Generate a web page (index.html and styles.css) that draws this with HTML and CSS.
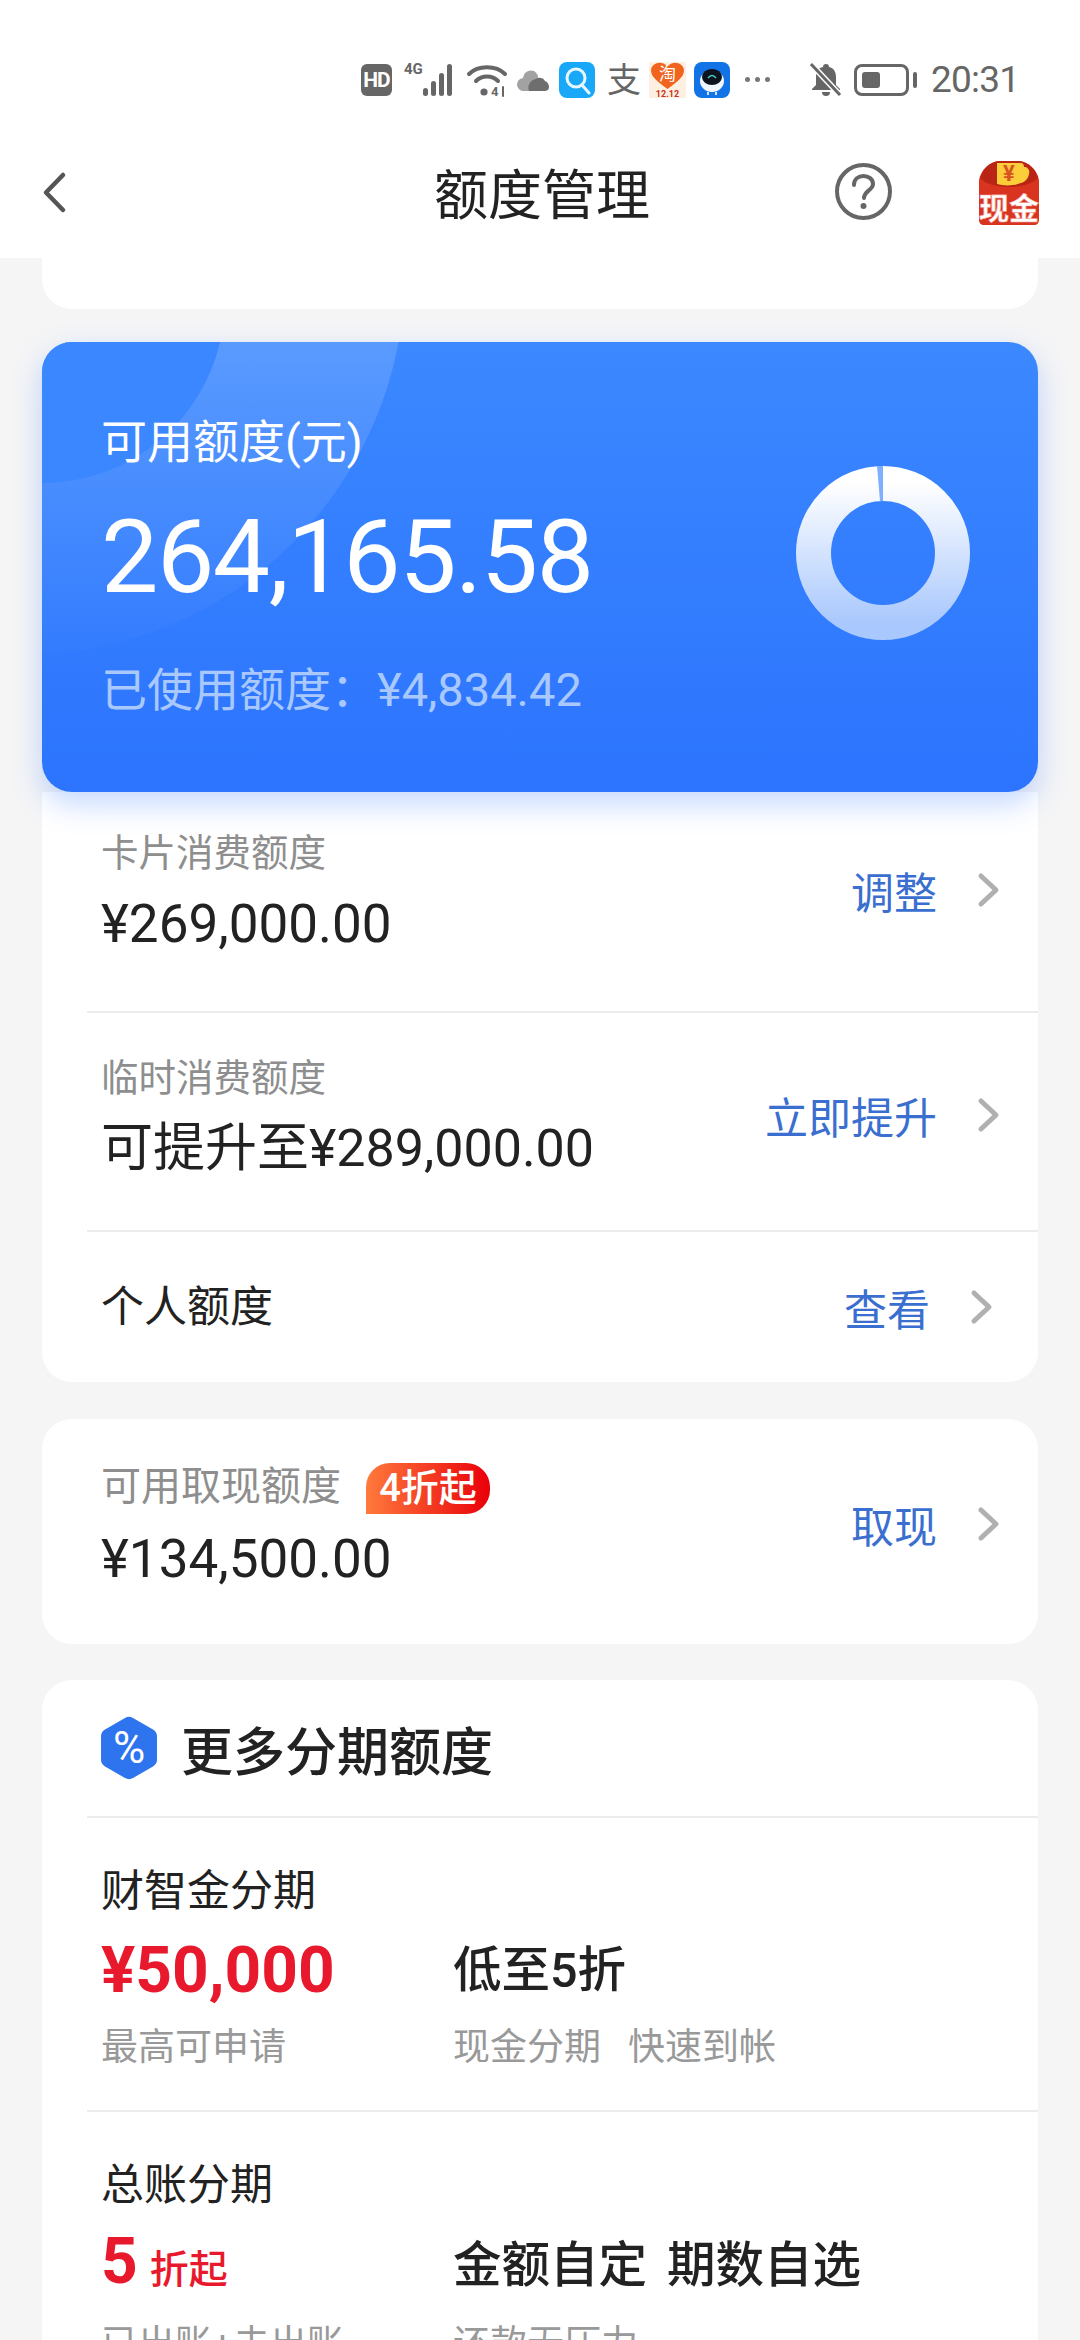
FILE: index.html
```html
<!DOCTYPE html>
<html lang="zh-CN">
<head>
    <meta charset="UTF-8">
    <title>额度管理</title>
    <link rel="stylesheet" href="styles.css">
</head>
<body>
    <header class="top">
        <div class="status">
            <span class="hd">HD</span>
            <svg class="signal" width="53" height="34" viewBox="0 0 53 34">
                <text x="0" y="11" class="net">4G</text>
                <g fill="#666"><rect x="19" y="25" width="5" height="8" rx="2.5"/><rect x="27" y="18" width="5" height="15" rx="2.5"/><rect x="35" y="10" width="5" height="23" rx="2.5"/><rect x="43" y="1" width="5" height="32" rx="2.5"/></g>
            </svg>
            <svg class="wifi" width="40" height="34" viewBox="0 0 40 34" fill="none" stroke="#666" stroke-width="4" stroke-linecap="round">
                <path d="M2 11C11 2 29 2 38 11"/><path d="M9 18C15 12 25 12 31 18"/>
                <circle cx="17" cy="29" r="3.6" fill="#666" stroke="none"/>
                <text x="24" y="33" class="wifi-4g">4</text>
                <path d="M36 24V33" stroke-width="2"/>
            </svg>
            <svg class="cloud" width="32" height="24" viewBox="0 0 32 24">
                <path d="M7 23a6.500 6.500 0 0 1-1-13C7 4 12 1 17 3c2 1 3 3 4 5l-2 15z" fill="#a2a2a2"/>
                <path d="M12 23c-2-5 1-11 7-12 2-2 7-2 9 2 3 1 4 4 4 6 0 3-2 4-5 4z" fill="#6e6e6e"/>
            </svg>
            <svg class="app search" width="36" height="36" viewBox="0 0 36 36">
                <rect width="36" height="36" rx="8" fill="#18a8f7"/>
                <circle cx="17" cy="16" r="9" fill="none" stroke="#e8f7ff" stroke-width="3"/>
                <path d="M23 23l7 8" stroke="#e8f7ff" stroke-width="3" stroke-linecap="round"/>
            </svg>
            <span class="zhi">支</span>
            <svg class="app taobao" width="37" height="36" viewBox="0 0 37 36">
                <rect width="37" height="36" fill="#fdf0e0"/>
                <path d="M18.500 27C9 20 2 15 2 8.500 2 3 8 0 12.500 1c3 .5 5 2 6 3.500 1-1.500 3-3 6-3.500C29 0 35 3 35 8.500 35 15 28 20 18.500 27z" fill="#f0641e"/>
                <text x="18.500" y="18" class="tao">淘</text>
                <text x="18.500" y="35" class="tao-date">12.12</text>
            </svg>
            <svg class="app bird" width="36" height="36" viewBox="0 0 36 36">
                <rect width="36" height="36" rx="8" fill="#1273e6"/>
                <ellipse cx="18" cy="19" rx="12" ry="11" fill="#f2f7fd"/>
                <ellipse cx="18" cy="15" rx="10" ry="8" fill="#0d1420"/>
                <path d="M14 16q4-5 8 0" fill="none" stroke="#3fd0c8" stroke-width="1.500"/>
                <path d="M14 30v3M22 30v3" stroke="#cfe3fa" stroke-width="2"/>
            </svg>
            <span class="dots"><i></i><i></i><i></i></span>
            <svg class="bell" width="32" height="34" viewBox="0 0 32 34">
                <path d="M16 1c2 0 3 1 3 3 5 1 7 5 7 10v8l4 4v1H2v-1l4-4v-8c0-5 2-9 7-10 0-2 1-3 3-3z" fill="#666"/>
                <path d="M12 29h8a4 4 0 0 1-8 0z" fill="#666"/>
                <path d="M2 2l28 30" stroke="#fff" stroke-width="6"/>
                <path d="M1 1l29 31" stroke="#666" stroke-width="3"/>
            </svg>
            <span class="battery"><i></i></span>
            <span class="battery-tip"></span>
            <span class="time">20:31</span>
        </div>
        <div class="nav">
            <svg class="back" width="24" height="41" viewBox="0 0 24 41" fill="none" stroke="#555" stroke-width="4.500" stroke-linecap="round" stroke-linejoin="round">
                <path d="M21 3L4 20.500 21 38"/>
            </svg>
            <h1>额度管理</h1>
            <svg class="help" width="57" height="57" viewBox="0 0 57 57">
                <circle cx="28.500" cy="28.500" r="26.500" fill="none" stroke="#666" stroke-width="4"/>
                <path d="M19 22c0-6 4.500-9 9.500-9s9.500 3 9.500 8c0 6-9 7-9 14" fill="none" stroke="#666" stroke-width="4" stroke-linecap="round"/>
                <circle cx="28.500" cy="43" r="3" fill="#666"/>
            </svg>
            <svg class="packet" width="64" height="66" viewBox="0 0 64 66">
                <path d="M2 20C4 10 12 2 22 1h20c10 1 18 9 20 19v40c0 3-2 5-5 5H7c-3 0-5-2-5-5z" fill="#d8341f"/>
                <path d="M3 18C14 30 50 30 61 18 58 8 51 2 42 1H22C13 2 6 8 3 18z" fill="#b92414"/>
                <path d="M20 3h24c2 0 3 2 3 4 4 0 6 3 5 7-1 5-4 8-8 9-8 3-17 3-24 1z" fill="#fbcd3a"/>
                <text x="32" y="21" class="packet-yen">¥</text>
                <text x="32" y="59" class="packet-text">现金</text>
            </svg>
        </div>
    </header>

    <main class="content">
        <div class="card stub"></div>

        <section class="limit">
            <div class="limit-text">
                <div class="limit-title">可用额度(元)</div>
                <div class="limit-amount">264,165.58</div>
                <div class="limit-used"><span>已使用额度：</span><span class="used-num">¥4,834.42</span></div>
            </div>
            <svg class="donut" width="176" height="176" viewBox="0 0 176 176">
                <defs>
                    <linearGradient id="ring" x1="0" y1="0" x2="0" y2="1">
                        <stop offset="0" stop-color="#ffffff"/>
                        <stop offset="1" stop-color="#a9c8fd"/>
                    </linearGradient>
                </defs>
                <circle cx="88" cy="88" r="69.500" fill="none" stroke="url(#ring)" stroke-width="35"/>
                <path d="M88 1V36L85 36 82 1z" fill="#7fb0ff"/>
            </svg>
        </section>

        <div class="card rows">
            <div class="row row-one">
                <div>
                    <div class="label">卡片消费额度</div>
                    <div class="money">¥269,000.00</div>
                </div>
                <a class="action">调整<svg class="chev" width="24" height="34" viewBox="0 0 24 34"><path d="M4 3l15 14L4 31"/></svg></a>
            </div>
            <div class="row row-two">
                <div>
                    <div class="label">临时消费额度</div>
                    <div class="money">可提升至¥289,000.00</div>
                </div>
                <a class="action">立即提升<svg class="chev" width="24" height="34" viewBox="0 0 24 34"><path d="M4 3l15 14L4 31"/></svg></a>
            </div>
            <div class="row row-three">
                <div class="plain">个人额度</div>
                <a class="action">查看<svg class="chev" width="24" height="34" viewBox="0 0 24 34"><path d="M4 3l15 14L4 31"/></svg></a>
            </div>
        </div>

        <div class="card cash">
            <div class="row row-cash">
                <div>
                    <div class="cash-top">
                        <span class="label label-big">可用取现额度</span>
                        <span class="badge">4折起</span>
                    </div>
                    <div class="money">¥134,500.00</div>
                </div>
                <a class="action">取现<svg class="chev" width="24" height="34" viewBox="0 0 24 34"><path d="M4 3l15 14L4 31"/></svg></a>
            </div>
        </div>

        <div class="card more">
            <div class="more-head">
                <svg class="hex" width="58" height="64" viewBox="0 0 58 64">
                    <path d="M25 2a8 8 0 0 1 8 0l20 11.500a8 8 0 0 1 4 7v23a8 8 0 0 1-4 7L33 62a8 8 0 0 1-8 0L5 50.500a8 8 0 0 1-4-7v-23a8 8 0 0 1 4-7z" fill="#2e74ee"/>
                    <text x="29" y="47" class="hex-text">%</text>
                </svg>
                <h2>更多分期额度</h2>
            </div>
            <div class="plan">
                <div class="plan-title">财智金分期</div>
                <div class="plan-grid">
                    <div class="big-red">¥50,000</div>
                    <div class="big-dark">低至5折</div>
                    <div class="sub">最高可申请</div>
                    <div class="sub sub-gap"><span>现金分期</span><span>快速到帐</span></div>
                </div>
            </div>
            <div class="plan plan-last">
                <div class="plan-title">总账分期</div>
                <div class="plan-grid">
                    <div class="big-red">5<span class="red-unit">折起</span></div>
                    <div class="big-dark words"><span>金额自定</span> <span>期数自选</span></div>
                    <div class="sub">已出账+未出账</div>
                    <div class="sub">还款无压力</div>
                </div>
            </div>
        </div>
    </main>
</body>
</html>
```

FILE: styles.css
```css
* {
    margin: 0;
    padding: 0;
    box-sizing: border-box;
}

body {
    width: 1080px;
    height: 2340px;
    overflow: hidden;
    background-color: #f5f5f6;
    font-family: Roboto, "Noto Sans CJK SC", sans-serif;
    color: #222;
}

svg {
    flex-shrink: 0;
    overflow: visible;
}

/* top area */
.top {
    height: 258px;
    background-color: #fff;
}

.status {
    height: 130px;
    padding: 29px 0 0 361px;
    display: flex;
    align-items: center;
    color: #666;
}

.hd {
    width: 31px;
    height: 32px;
    margin-right: 12px;
    border-radius: 6px;
    background-color: #666;
    color: #fff;
    font-size: 21px;
    font-weight: 700;
    letter-spacing: -1px;
    line-height: 32px;
    text-align: center;
}

.net {
    font-family: Roboto, sans-serif;
    font-size: 15px;
    font-weight: 700;
    fill: #666;
}

.wifi-4g {
    font-family: Roboto, sans-serif;
    font-size: 13px;
    font-weight: 700;
    fill: #666;
    stroke: none;
}

.signal { margin-right: 10px; }
.wifi { margin-right: 10px; }
.cloud { margin-right: 10px; }
.search { margin-right: 12px; }

.zhi {
    width: 34px;
    margin-right: 8px;
    font-size: 34px;
    line-height: 36px;
    text-align: center;
    color: #666;
}

.taobao { margin-right: 8px; }
.bird { margin-right: 15px; }

.tao {
    font-family: "Noto Sans CJK SC", sans-serif;
    font-size: 17px;
    fill: #fff;
    text-anchor: middle;
}

.tao-date {
    font-family: Roboto, sans-serif;
    font-size: 9px;
    font-weight: 700;
    fill: #c8321e;
    text-anchor: middle;
}

.dots {
    width: 25px;
    margin-right: 40px;
    display: flex;
    justify-content: space-between;
}

.dots i {
    width: 5px;
    height: 5px;
    border-radius: 50%;
    background-color: #777;
}

.bell { margin-right: 12px; }

.battery {
    width: 55px;
    height: 32px;
    padding: 5px;
    margin-right: 4px;
    border: 3px solid #666;
    border-radius: 8px;
}

.battery i {
    display: block;
    width: 18px;
    height: 100%;
    border-radius: 3px;
    background-color: #666;
}

.battery-tip {
    width: 4px;
    height: 16px;
    margin-right: 14px;
    border-radius: 2px;
    background-color: #666;
}

.time {
    font-size: 37px;
    letter-spacing: -.8px;
    color: #666;
}

.nav {
    height: 128px;
    padding: 0 39px 0 42px;
    display: flex;
    align-items: center;
}

.nav h1 {
    width: 216px;
    margin: 6px 0 0 368px;
    font-size: 54px;
    font-weight: 400;
    line-height: 72px;
    text-align: center;
}

.back { margin-top: -4px; }

.help {
    margin: -6px 0 0 185px;
}

.packet {
    margin: -2px 0 0 85px;
}

.packet-yen {
    font-family: Roboto, sans-serif;
    font-size: 22px;
    font-weight: 700;
    fill: #d8531f;
    text-anchor: middle;
}

.packet-text {
    font-family: "Noto Sans CJK SC", sans-serif;
    font-size: 30px;
    font-weight: 700;
    fill: #fff;
    stroke: #f3a8a0;
    stroke-width: .6px;
    text-anchor: middle;
}

/* cards */
.content {
    padding: 0 42px;
}

.card {
    background-color: #fff;
    border-radius: 30px;
}

.stub {
    height: 51px;
    border-radius: 0 0 30px 30px;
}

.limit {
    height: 450px;
    margin-top: 33px;
    padding: 0 67px 0 59px;
    border-radius: 30px;
    background: linear-gradient(180deg, #3b88ff 0%, #2c74fe 100%);
    box-shadow: 0 12px 30px rgba(44, 116, 254, .28);
    display: flex;
    align-items: center;
    justify-content: space-between;
    position: relative;
    overflow: hidden;
    z-index: 1;
}

/* the two soft circles in the corner */
.limit::before {
    content: "";
    position: absolute;
    left: -403px;
    top: -453px;
    width: 766px;
    height: 766px;
    border-radius: 50%;
    background: linear-gradient(180deg, rgba(255, 255, 255, .16) 58%, rgba(255, 255, 255, .01) 100%);
}

.limit::after {
    content: "";
    position: absolute;
    left: -183px;
    top: -225px;
    width: 366px;
    height: 366px;
    border-radius: 50%;
    background: #3a87ff;
}

.limit-text {
    position: relative;
    z-index: 1;
    color: #fff;
}

.limit-title {
    margin-top: -2px;
    font-size: 46px;
    line-height: 60px;
}

.limit-amount {
    margin-top: 27px;
    font-size: 102px;
    letter-spacing: -1.400px;
    line-height: 116px;
}

.limit-used {
    margin-top: 45px;
    font-size: 46px;
    line-height: 60px;
    color: #a9c8fd;
}

.used-num {
    font-size: 47px;
}

.donut {
    position: relative;
    z-index: 1;
    margin-top: -28px;
}

.rows {
    height: 590px;
    border-radius: 0 0 30px 30px;
    padding-left: 45px;
}

.row {
    display: flex;
    align-items: center;
    justify-content: space-between;
    padding: 0 37px 0 14px;
    border-bottom: 2px solid #ececec;
}

.row-one { height: 221px; padding-bottom: 24px; }
.row-two { height: 219px; padding-bottom: 14px; }
.row-two .money { font-size: 52px; }

.row-three {
    height: 150px;
    border-bottom: none;
    padding-right: 44px;
}

.label {
    font-size: 37.500px;
    line-height: 56px;
    color: #8e8e8e;
}

.money {
    margin-top: 13px;
    font-size: 53px;
    line-height: 60px;
}

.plain {
    font-size: 43px;
    line-height: 60px;
}

.action {
    display: flex;
    align-items: center;
    font-size: 43px;
    color: #3a6fd0;
}

.chev {
    margin-left: 40px;
    fill: none;
    stroke: #b0b0b0;
    stroke-width: 5;
    stroke-linecap: round;
    stroke-linejoin: round;
}

.cash {
    height: 225px;
    margin-top: 37px;
    padding-left: 45px;
}

.row-cash {
    height: 225px;
    border-bottom: none;
    padding-bottom: 16px;
}

.row-cash .money {
    margin-top: 14px;
}

.cash-top {
    display: flex;
    align-items: center;
}

.label-big {
    font-size: 40px;
}

.badge {
    width: 124px;
    height: 51px;
    margin: 4px 0 0 25px;
    border-radius: 24px 24px 24px 0;
    background: linear-gradient(90deg, #ff7a3c 0%, #e90009 100%);
    color: #fff;
    font-size: 38px;
    font-weight: 500;
    line-height: 50px;
    text-align: center;
}

.more {
    height: 720px;
    margin-top: 36px;
    padding-left: 45px;
    border-radius: 30px 30px 0 0;
}

.more-head {
    height: 138px;
    display: flex;
    align-items: center;
    gap: 23px;
    padding-left: 13px;
    border-bottom: 2px solid #ececec;
}

.more-head h2 {
    font-size: 52px;
    font-weight: 500;
}

.hex-text {
    font-family: Roboto, sans-serif;
    font-size: 44px;
    font-weight: 400;
    fill: #fff;
    text-anchor: middle;
}

.plan {
    height: 294px;
    padding: 43px 0 0 14px;
    border-bottom: 2px solid #ececec;
}

.plan-last {
    border-bottom: none;
}

.plan-title {
    font-size: 43px;
    line-height: 60px;
}

.plan-grid {
    margin-top: 14px;
    display: grid;
    grid-template-columns: 352px 1fr;
    row-gap: 13px;
    align-items: center;
}

.plan-last .plan-grid {
    margin-top: 11px;
    row-gap: 11px;
}

.big-red {
    font-size: 64px;
    font-weight: 700;
    line-height: 72px;
    color: #e8192c;
}

.red-unit {
    margin-left: 12px;
    font-size: 39px;
    font-weight: 500;
}

.big-dark {
    font-size: 48.500px;
    font-weight: 500;
    line-height: 72px;
}

.words span + span {
    margin-left: 8px;
}

.sub {
    font-size: 37px;
    line-height: 56px;
    color: #999;
}

.sub-gap span + span {
    margin-left: 27px;
}
```
